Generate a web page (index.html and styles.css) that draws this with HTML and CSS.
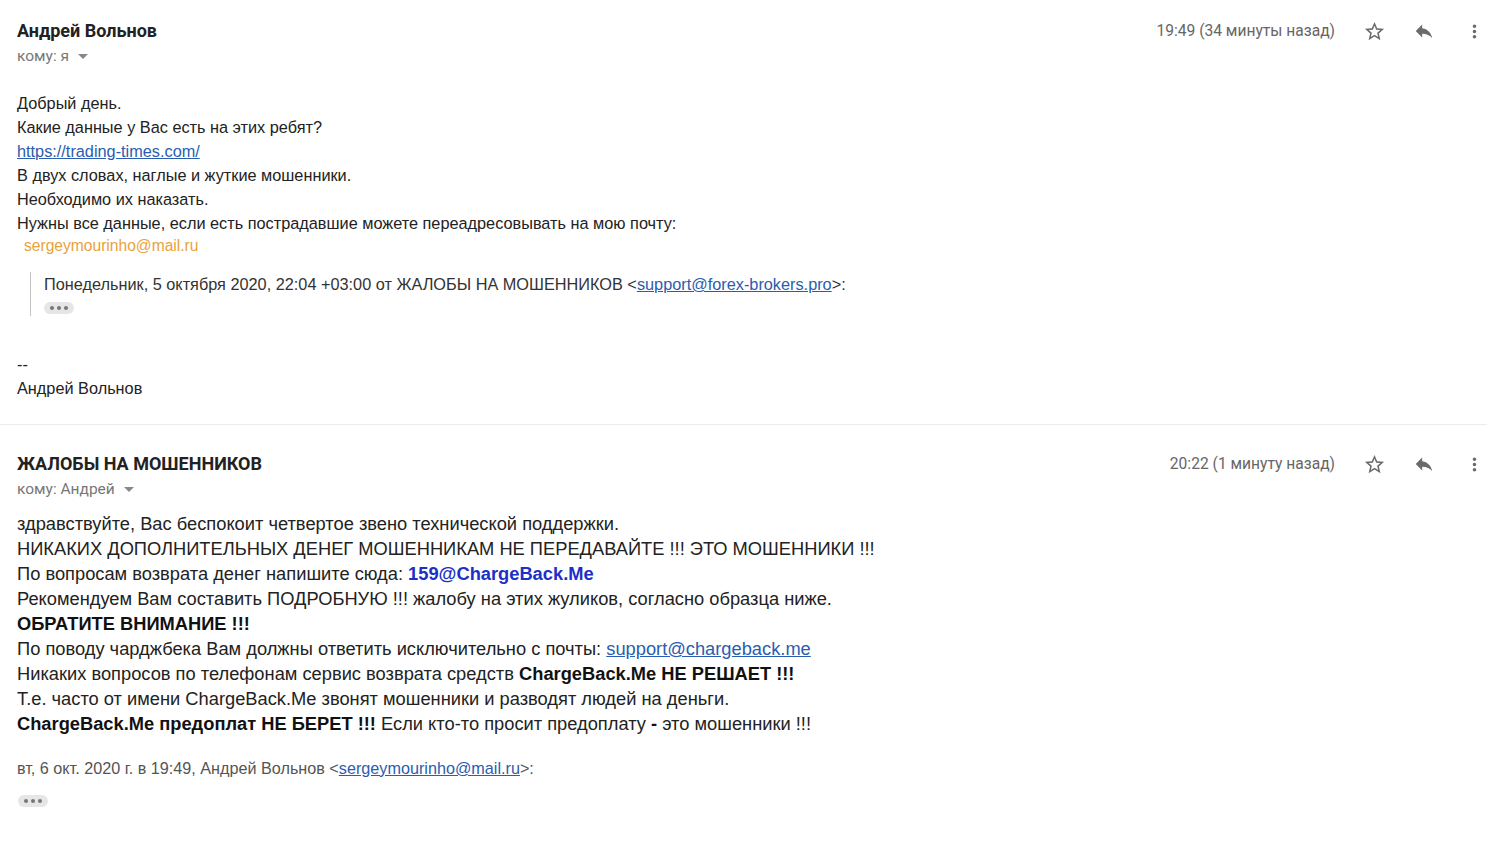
FILE: index.html
```html
<!DOCTYPE html>
<html lang="ru">
<head>
<meta charset="UTF-8" />
<title>Письмо</title>
<link rel="stylesheet" href="styles.css">
</head>
<body>

<div class="msg msg-first">
  <div class="msg-head">
    <div class="sender">
      <div class="sender-name">Андрей Вольнов</div>
      <div class="to">кому: я <span class="caret"></span></div>
    </div>
    <div class="head-right">
      <span class="time">19:49 (34 минуты назад)</span>
      <span class="icon"><svg class="star" viewBox="0 0 24 24"><path d="M22 9.24l-7.19-.62L12 2 9.19 8.63 2 9.24l5.46 4.73L5.820 21 12 17.27 18.18 21l-1.63-7.03L22 9.24zM12 15.4l-3.76 2.27 1-4.28-3.32-2.88 4.38-.38L12 6.1l1.71 4.04 4.38.38-3.32 2.88 1 4.28L12 15.4z"/></svg></span>
      <span class="icon"><svg viewBox="0 0 24 24"><path d="M10 9V5l-7 7 7 7v-4.1c5 0 8.5 1.6 11 5.1-1-5-4-10-11-11z"/></svg></span>
      <span class="icon"><svg class="more" viewBox="0 0 24 24"><path d="M12 8c1.1 0 2-.9 2-2s-.9-2-2-2-2 .9-2 2 .9 2 2 2zm0 2c-1.1 0-2 .9-2 2s.9 2 2 2 2-.9 2-2-.9-2-2-2zm0 6c-1.1 0-2 .9-2 2s.9 2 2 2 2-.9 2-2-.9-2-2-2z"/></svg></span>
    </div>
  </div>

  <div class="msg-body narrow">
    <div>Добрый день.</div>
    <div>Какие данные у Вас есть на этих ребят?</div>
    <div><a href="#">https://trading-times.com/</a></div>
    <div>В двух словах, наглые и жуткие мошенники.</div>
    <div>Необходимо их наказать.</div>
    <div>Нужны все данные, если есть пострадавшие можете переадресовывать на мою почту:</div>
    <div class="orange">sergeymourinho@mail.ru</div>

    <div class="quote">
      <div>Понедельник, 5 октября 2020, 22:04 +03:00 от ЖАЛОБЫ НА МОШЕННИКОВ &lt;<a href="#">support@forex-brokers.pro</a>&gt;:</div>
      <div class="dots"><i></i><i></i><i></i></div>
    </div>

    <div class="sign">
      <div>--</div>
      <div>Андрей Вольнов</div>
    </div>
  </div>
</div>
<div class="separator"></div>

<div class="msg msg-second">
  <div class="msg-head">
    <div class="sender">
      <div class="sender-name">ЖАЛОБЫ НА МОШЕННИКОВ</div>
      <div class="to">кому: Андрей <span class="caret"></span></div>
    </div>
    <div class="head-right">
      <span class="time">20:22 (1 минуту назад)</span>
      <span class="icon"><svg class="star" viewBox="0 0 24 24"><path d="M22 9.24l-7.19-.62L12 2 9.19 8.63 2 9.24l5.46 4.73L5.82 21 12 17.27 18.18 21l-1.63-7.03L22 9.24zM12 15.4l-3.76 2.27 1-4.28-3.32-2.88 4.38-.38L12 6.1l1.71 4.04 4.38.38-3.32 2.88 1 4.28L12 15.4z"/></svg></span>
      <span class="icon"><svg viewBox="0 0 24 24"><path d="M10 9V5l-7 7 7 7v-4.1c5 0 8.5 1.6 11 5.1-1-5-4-10-11-11z"/></svg></span>
      <span class="icon"><svg class="more" viewBox="0 0 24 24"><path d="M12 8c1.1 0 2-.9 2-2s-.9-2-2-2-2 .9-2 2 .9 2 2 2zm0 2c-1.1 0-2 .9-2 2s.9 2 2 2 2-.9 2-2-.9-2-2-2zm0 6c-1.1 0-2 .9-2 2s.9 2 2 2 2-.9 2-2-.9-2-2-2z"/></svg></span>
    </div>
  </div>

  <div class="msg-body wide">
    <div>здравствуйте, Вас беспокоит четвертое звено технической поддержки.</div>
    <div>НИКАКИХ ДОПОЛНИТЕЛЬНЫХ ДЕНЕГ МОШЕННИКАМ НЕ ПЕРЕДАВАЙТЕ !!! ЭТО МОШЕННИКИ !!!</div>
    <div>По вопросам возврата денег напишите сюда: <b class="blue">159@ChargeBack.Me</b></div>
    <div>Рекомендуем Вам составить ПОДРОБНУЮ !!! жалобу на этих жуликов, согласно образца ниже.</div>
    <div><b>ОБРАТИТЕ ВНИМАНИЕ !!!</b></div>
    <div>По поводу чарджбека Вам должны ответить исключительно с почты: <a href="#">support@chargeback.me</a></div>
    <div>Никаких вопросов по телефонам сервис возврата средств <b>ChargeBack.Me НЕ РЕШАЕТ !!!</b></div>
    <div>Т.е. часто от имени ChargeBack.Me звонят мошенники и разводят людей на деньги.</div>
    <div><b>ChargeBack.Me предоплат НЕ БЕРЕТ !!!</b> Если кто-то просит предоплату <b>-</b> это мошенники !!!</div>
  </div>

  <div class="reply-head">вт, 6 окт. 2020 г. в 19:49, Андрей Вольнов &lt;<a href="#">sergeymourinho@mail.ru</a>&gt;:</div>
  <div class="dots dots-second"><i></i><i></i><i></i></div>
</div>

</body>
</html>
```

FILE: styles.css
```css
body {
  margin: 0;
  background: #fff;
  color: #222;
  font-family: "Roboto", "Liberation Sans", sans-serif;
}
a { color: #2a5db0; text-decoration: underline; }

.msg { padding: 0 6px 0 17px; }
.msg-first { padding-top: 20px; padding-bottom: 24px; }
.msg-second { padding-top: 28px; }
.separator {
  height: 1px;
  background: #ececec;
  margin-right: 18px;
}

.msg-head {
  display: flex;
  justify-content: space-between;
  align-items: flex-start;
}
.sender-name {
  font-size: 18px;
  font-weight: bold;
  color: #222;
  line-height: 22px;
}
.to {
  font-size: 15.5px;
  color: #777;
  margin-top: 5px;
  line-height: 18px;
  display: flex;
  align-items: center;
  gap: 5px;
}
.caret {
  display: inline-block;
  width: 0; height: 0;
  border-left: 5px solid transparent;
  border-right: 5px solid transparent;
  border-top: 5px solid #888;
  margin-left: 4px;
}
.head-right {
  display: flex;
  align-items: center;
  height: 22px;
}
.time {
  font-size: 15.6px;
  color: #666;
  margin-right: 14px;
}
.icon {
  width: 50px;
  display: flex;
  justify-content: center;
}
.icon svg { width: 22px; height: 22px; fill: #6b6b6b; }
.icon svg.star { width: 23px; height: 23px; }
.icon svg.more { width: 21px; height: 21px; }

.msg-body { margin-top: 26px; }
.narrow {
  font-family: "Liberation Sans", Arial, sans-serif;
  font-size: 16.3px;
  line-height: 24px;
  color: #222;
}
.orange { color: #e9a23b; font-size: 15.6px; padding-left: 7px; line-height: 22px; }

.quote {
  margin: 15px 0 0 13px;
  padding: 0 0 2px 13px;
  border-left: 1px solid #c4c4c4;
  color: #333;
}
.dots {
  display: flex;
  gap: 3px;
  width: fit-content;
  align-items: center;
  background: #e6e6e6;
  height: 12px;
  padding: 0 6px;
  border-radius: 6px;
  margin-top: 6px;
}
.dots i {
  width: 4px;
  height: 4px;
  border-radius: 50%;
  background: #777;
}
.sign { margin-top: 36px; }

.wide {
  font-family: "Liberation Sans", Arial, sans-serif;
  font-size: 18.3px;
  line-height: 25px;
  color: #222;
  margin-top: 13px;
}
.wide b { color: #111; }
.wide b.blue { color: #1c2fc7; }

.reply-head {
  font-family: "Liberation Sans", Arial, sans-serif;
  font-size: 16.2px;
  color: #555;
  margin-top: 20px;
  line-height: 24px;
}
.dots-second { margin-left: 1px; margin-top: 15px; }
```
